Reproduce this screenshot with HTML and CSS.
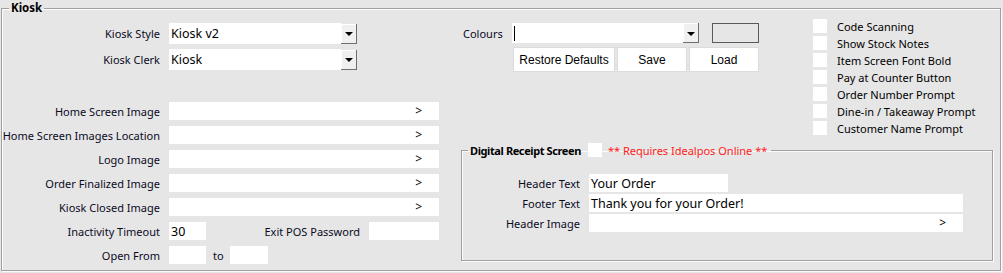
FILE: index.html
```html
<!DOCTYPE html>
<html>
<head>
<meta charset="utf-8">
<link rel="stylesheet" href="styles.css">
</head>
<body>
<fieldset class="group main">
  <legend class="title">Kiosk</legend>
  <div class="cols">
    <div class="left">
      <div class="combo-row first">
        <span class="lbl">Kiosk Style</span>
        <div class="combo"><span class="val">Kiosk v2</span></div>
        <div class="drop"><span class="tri"></span></div>
      </div>
      <div class="combo-row">
        <span class="lbl">Kiosk Clerk</span>
        <div class="combo"><span class="val">Kiosk</span></div>
        <div class="drop"><span class="tri"></span></div>
      </div>
      <div class="rows">
        <div class="row"><span class="lbl">Home Screen Image</span><div class="field wide"><span class="gt">&gt;</span></div></div>
        <div class="row"><span class="lbl">Home Screen Images Location</span><div class="field wide"><span class="gt">&gt;</span></div></div>
        <div class="row"><span class="lbl">Logo Image</span><div class="field wide"><span class="gt">&gt;</span></div></div>
        <div class="row"><span class="lbl">Order Finalized Image</span><div class="field wide"><span class="gt">&gt;</span></div></div>
        <div class="row"><span class="lbl">Kiosk Closed Image</span><div class="field wide"><span class="gt">&gt;</span></div></div>
        <div class="row">
          <span class="lbl">Inactivity Timeout</span><div class="field small"><span class="val">30</span></div>
          <span class="lbl2">Exit POS Password</span><div class="field pwd"></div>
        </div>
        <div class="row">
          <span class="lbl">Open From</span><div class="field small"></div>
          <span class="to">to</span><div class="field small2"></div>
        </div>
      </div>
    </div>
    <div class="right">
      <div class="top">
        <div class="colours">
          <div class="colour-row">
            <span class="clbl">Colours</span>
            <div class="ccombo"><span class="caret"></span></div>
            <div class="drop"><span class="tri"></span></div>
            <div class="swatch"></div>
          </div>
          <div class="btns">
            <button class="btn b1">Restore Defaults</button>
            <button class="btn b2">Save</button>
            <button class="btn b2">Load</button>
          </div>
        </div>
        <div class="checks">
          <div class="chk"><span class="box"></span><span>Code Scanning</span></div>
          <div class="chk"><span class="box"></span><span>Show Stock Notes</span></div>
          <div class="chk"><span class="box"></span><span>Item Screen Font Bold</span></div>
          <div class="chk"><span class="box"></span><span>Pay at Counter Button</span></div>
          <div class="chk"><span class="box"></span><span>Order Number Prompt</span></div>
          <div class="chk"><span class="box"></span><span>Dine-in / Takeaway Prompt</span></div>
          <div class="chk"><span class="box"></span><span>Customer Name Prompt</span></div>
        </div>
      </div>
      <fieldset class="group receipt">
        <legend class="rlegend"><span class="title rtitle">Digital Receipt Screen</span><span class="box"></span><span class="red">** Requires Idealpos Online **</span></legend>
        <div class="rrow"><span class="rlbl">Header Text</span><div class="field hdr"><span class="val">Your Order</span></div></div>
        <div class="rrow"><span class="rlbl">Footer Text</span><div class="field rwide"><span class="val">Thank you for your Order!</span></div></div>
        <div class="rrow"><span class="rlbl">Header Image</span><div class="field rwide"><span class="gt">&gt;</span></div></div>
      </fieldset>
    </div>
  </div>
</fieldset>
</body>
</html>
```
FILE: styles.css
```css
html, body {
  margin: 0;
  padding: 0;
  background: #e6e6e6;
}
body {
  width: 1003px;
  height: 273px;
  overflow: hidden;
  font-family: "Noto Sans", "DejaVu Sans", sans-serif;
  font-size: 11px;
  color: #0a0a1e;
}
.group {
  border: 1px solid #a0a0a0;
  box-shadow: 1px 1px 0 #fbfbfb, inset 1px 1px 0 #fbfbfb;
  margin: 0;
}
.main {
  margin: 0 2px 0 1px;
  padding: 0;
}
.title {
  font-weight: bold;
  font-size: 11.5px;
  color: #000;
}
.main > legend {
  padding: 0 2px;
  margin-left: 7px;
  line-height: 16px;
}
.cols {
  display: flex;
  gap: 21px;
  height: 254px;
}
.left {
  width: 438px;
  display: flex;
  flex-direction: column;
}
.lbl {
  width: 158px;
  text-align: right;
  margin-right: 9px;
  flex: none;
  white-space: nowrap;
}
.combo-row {
  display: flex;
  align-items: center;
  height: 21px;
  margin-top: 5px;
}
.combo-row.first {
  margin-top: 7px;
}
.combo {
  width: 172px;
  height: 21px;
  background: #fff;
  display: flex;
  align-items: center;
}
.val {
  font-size: 12.5px;
  padding-left: 2px;
  color: #000;
  white-space: nowrap;
}
.drop {
  width: 15px;
  height: 19px;
  background: #f0f0f0;
  border-right: 1px solid #6e6e6e;
  border-bottom: 1px solid #6e6e6e;
  box-shadow: inset 1px 1px 0 #fff;
  display: flex;
  align-items: center;
  justify-content: center;
  flex: none;
}
.tri {
  width: 0;
  height: 0;
  border-left: 4px solid transparent;
  border-right: 4px solid transparent;
  border-top: 4px solid #000;
  margin-top: 2px;
}
.rows {
  display: flex;
  flex-direction: column;
  gap: 6px;
  margin-top: 32px;
}
.row {
  display: flex;
  align-items: center;
  height: 18px;
}
.field {
  height: 18px;
  background: #fff;
  display: flex;
  align-items: center;
  position: relative;
  flex: none;
}
.wide {
  width: 270px;
}
.gt {
  position: absolute;
  right: 17px;
  top: 0;
  line-height: 18px;
  font-size: 12px;
  color: #000;
}
.small {
  width: 37px;
}
.small2 {
  width: 38px;
}
.lbl2 {
  width: 98px;
  margin-left: 56px;
  margin-right: 9px;
  text-align: right;
  white-space: nowrap;
}
.pwd {
  width: 70px;
}
.to {
  margin-left: 7px;
  margin-right: 6px;
}
.right {
  width: 533px;
  display: flex;
  flex-direction: column;
}
.top {
  display: flex;
  height: 126px;
}
.colours {
  width: 300px;
  padding-left: 2px;
  margin-top: 7px;
}
.colour-row {
  display: flex;
  align-items: center;
  height: 20px;
}
.clbl {
  width: 49px;
}
.ccombo {
  width: 171px;
  height: 20px;
  background: #fff;
  display: flex;
  align-items: center;
}
.caret {
  width: 1px;
  height: 15px;
  background: #000;
  margin-left: 2px;
}
.swatch {
  width: 45px;
  height: 18px;
  border: 1px solid #5a5a5a;
  margin-left: 13px;
}
.btns {
  display: flex;
  gap: 2px;
  margin-top: 4px;
  margin-left: 50px;
}
.btn {
  height: 25px;
  background: #fff;
  border: 1px solid #dcdcdc;
  font-family: "Liberation Sans", Arial, sans-serif;
  font-size: 12px;
  color: #000;
  padding: 0;
}
.b1 {
  width: 102px;
}
.b2 {
  width: 70px;
}
.checks {
  margin-left: 50px;
  margin-top: 3px;
  display: flex;
  flex-direction: column;
  gap: 3px;
}
.chk {
  display: flex;
  align-items: center;
  height: 14px;
  white-space: nowrap;
  color: #000;
}
.box {
  width: 14px;
  height: 14px;
  background: #fff;
  margin-right: 10px;
  flex: none;
}
.receipt {
  margin: 0;
  padding: 16px 0 26px 0;
  width: 530px;
}
.rlegend {
  display: flex;
  align-items: center;
  padding: 0 4px 0 2px;
  margin-left: 6px;
  height: 16px;
}
.rtitle {
  font-size: 11px;
  letter-spacing: -0.4px;
}
.rlegend .box {
  margin-left: 7px;
  margin-right: 6px;
}
.red {
  color: #ff1a1a;
  font-size: 11px;
}
.rrow {
  display: flex;
  align-items: center;
  height: 18px;
  margin-bottom: 2px;
}
.rlbl {
  width: 118px;
  text-align: right;
  margin-right: 9px;
  white-space: nowrap;
}
.hdr {
  width: 139px;
}
.rwide {
  width: 374px;
}
```
